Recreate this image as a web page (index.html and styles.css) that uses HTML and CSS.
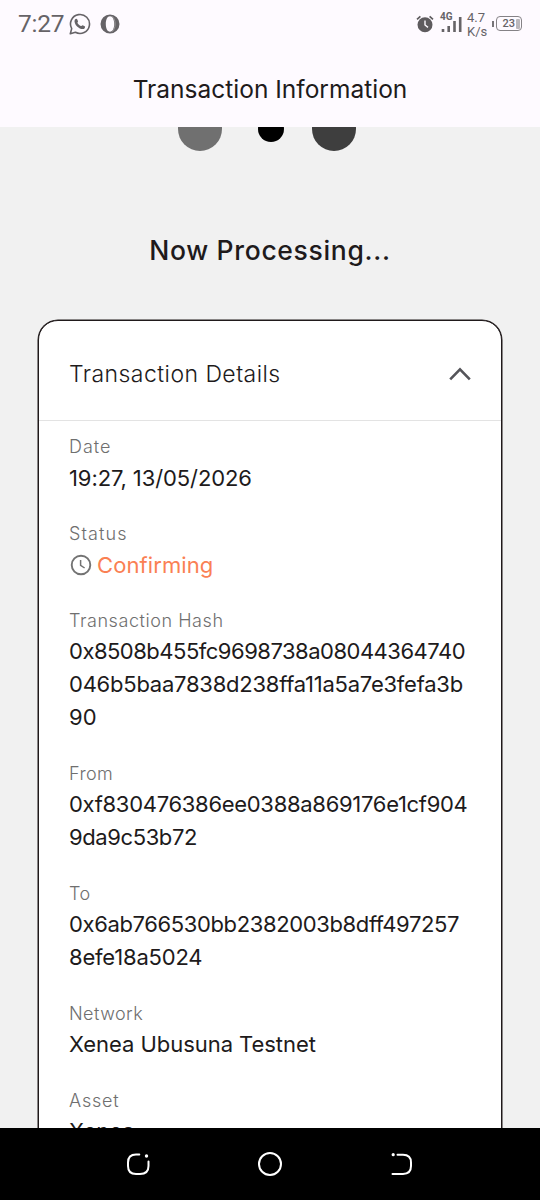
FILE: index.html
```html
<!DOCTYPE html>
<html lang="en">
<head>
<meta charset="utf-8">
<title>Transaction Information</title>
<link rel="stylesheet" href="styles.css">
</head>
<body>
<div class="screen">
  <header class="top">
    <div class="statusbar">
      <div class="status-left">
        <span class="clock">7:27</span>
        <svg class="whatsapp" width="22" height="22" viewBox="0 0 22 22">
          <path d="M1.3 20.7 2.7 15.6A9.5 9.5 0 1 1 6.4 19.3Z" fill="none" stroke="#666367" stroke-width="1.6" stroke-linejoin="round"/>
          <path d="M5.800 6.700c.7-1.300 2.100-1.300 2.500-.3l.7 1.800c.2.700-.8 1.200-.5 1.800.8 1.500 1.900 2.400 3.400 3.100.6.200 1.200-1.200 1.800-.9l2 1c.9.500.1 2.200-.9 2.700-1.600.700-4.600-.300-6.700-2.400-2-2-3.200-5-2.300-6.800Z" fill="#666367"/>
        </svg>
        <svg class="opera" width="20" height="20" viewBox="0 0 20 20">
          <path fill="#666367" fill-rule="evenodd" d="M10 .5a9.500 9.500 0 1 0 0 19a9.500 9.500 0 1 0 0-19ZM10 2.300c2.700 0 4.200 3.400 4.200 7.700s-1.500 7.700-4.200 7.700S5.800 14.300 5.800 10 7.300 2.300 10 2.300Z"/>
          <path d="M12 2.200c4.200 3.100 4.200 12.500 0 15.600" fill="none" stroke="#aaa7aa" stroke-width=".7"/>
        </svg>
      </div>
      <div class="status-right">
        <svg width="18" height="18" viewBox="0 0 18 18">
          <circle cx="9" cy="9.800" r="7.500" fill="#5e5b5e"/>
          <path d="M1 4.300 4.400 1.300M17 4.300 13.600 1.300" stroke="#5e5b5e" stroke-width="1.700"/>
          <path d="M9 5.500V10l3 2.400" fill="none" stroke="#fefaff" stroke-width="1.400"/>
        </svg>
        <div class="signal">
          <span class="gen">4G</span>
          <svg width="22" height="20" viewBox="0 0 22 20">
            <path d="M3 15v3M8.700 12V18M14.500 7V18M20.200 3v15" stroke="#666367" stroke-width="2.600"/>
          </svg>
        </div>
        <div class="speed"><span>4.7</span><span>K/s</span></div>
        <div class="battery"><span class="nub"></span><span class="cell">23<i class="rest"></i></span></div>
      </div>
    </div>
    <h1 class="title">Transaction Information</h1>
  </header>

  <main class="content">
    <div class="loader">
      <span class="dot dot-mid"></span>
      <span class="dot dot-small"></span>
      <span class="dot dot-dark"></span>
    </div>
    <h2 class="processing">Now Processing...</h2>
    <section class="card">
      <div class="card-head">
        <span class="card-title">Transaction Details</span>
        <svg width="22" height="14" viewBox="0 0 22 14"><path d="M1.200 12.300 11 2.300l9.800 10" fill="none" stroke="#545459" stroke-width="2.600"/></svg>
      </div>
      <dl class="details">
        <div class="item"><dt><span class="l-date">Date</span></dt><dd><span class="v-date">19:27, 13/05/2026</span></dd></div>
        <div class="item"><dt><span class="l-status">Status</span></dt>
          <dd class="confirming">
            <svg width="22" height="22" viewBox="0 0 22 22" fill="none" stroke="#737373"><circle cx="11" cy="11" r="9.300" stroke-width="1.900"/><path d="M10.600 6v5.300l4 2.700" stroke-width="1.500"/></svg>
            <span class="v-status">Confirming</span>
          </dd></div>
        <div class="item"><dt><span class="l-hash">Transaction Hash</span></dt><dd><span class="hash-1">0x8508b455fc9698738a08044364740</span><br><span class="hash-2">046b5baa7838d238ffa11a5a7e3fefa3b</span><br><span class="hash-3">90</span></dd></div>
        <div class="item"><dt><span class="l-from">From</span></dt><dd><span class="from-1">0xf830476386ee0388a869176e1cf904</span><br><span class="from-2">9da9c53b72</span></dd></div>
        <div class="item"><dt><span class="l-to">To</span></dt><dd><span class="to-1">0x6ab766530bb2382003b8dff497257</span><br><span class="to-2">8efe18a5024</span></dd></div>
        <div class="item"><dt><span class="l-net">Network</span></dt><dd><span class="v-net">Xenea Ubusuna Testnet</span></dd></div>
        <div class="item"><dt><span class="l-asset">Asset</span></dt><dd><span class="v-asset">Xenea</span></dd></div>
      </dl>
    </section>
  </main>

  <nav class="navbar">
    <svg width="26" height="26" viewBox="0 0 26 26" fill="none" stroke="#fff" stroke-width="2" stroke-linecap="round">
      <path d="M14.300 3.500H11Q3 3.500 3 11.500V15Q3 23 11 23h4Q23.500 23 23.500 15v-4.500"/><circle cx="21.500" cy="5" r="1.700" fill="#fff" stroke="none"/>
    </svg>
    <svg width="26" height="26" viewBox="0 0 26 26" fill="none" stroke="#fff" stroke-width="2"><circle cx="13" cy="13" r="11"/></svg>
    <svg width="26" height="26" viewBox="0 0 26 26" fill="none" stroke="#fff" stroke-width="2" stroke-linecap="round">
      <path d="M8.500 3.700H14Q22 3.700 22 11.500V15Q22 22.900 14 22.900H3.500"/><circle cx="4.200" cy="3.700" r="1.600" fill="#fff" stroke="none"/>
    </svg>
  </nav>
</div>
</body>
</html>
```
FILE: styles.css
```css
* { box-sizing: border-box; margin: 0; padding: 0; }
body { background: #f1f1f1; font-family: Inter, "Liberation Sans", sans-serif; color: #201a1b; }
.screen { width: 540px; height: 1200px; display: flex; flex-direction: column; overflow: hidden; }

.top { height: 127px; flex: none; background: #fefaff; }
.statusbar { height: 50px; padding: 0 18px; display: flex; justify-content: space-between; font-family: Roboto, sans-serif; color: #666367; }
.status-left { display: flex; align-items: center; height: 48px; }
.clock { font-size: 24.500px; line-height: 48px; width: 51px; letter-spacing: -.2px; }
.opera { margin-left: 9px; }
.status-right { display: flex; height: 47px; align-items: center; }
.signal { width: 23px; height: 20px; margin-left: 6px; display: grid; }
.signal > * { grid-area: 1 / 1; }
.gen { font-size: 10px; font-weight: 700; line-height: 10px; margin-top: -2px; }
.speed { display: flex; flex-direction: column; font-size: 13px; line-height: 14px; margin-left: 4px; width: 21px; padding-top: 2px; }
.battery { display: flex; align-items: center; margin-left: 4px; }
.nub { width: 2px; height: 6px; background: #777478; margin-right: 2px; }
.cell { width: 26px; height: 15px; border: 1px solid #858286; border-radius: 4px; display: flex; align-items: center; justify-content: flex-end; gap: 1px; padding-right: 1px; font-size: 11px; font-weight: 500; }
.rest { width: 4px; height: 10px; background: #bbb8bc; border-radius: 1px; }
.title { height: 77px; line-height: 78px; text-align: center; font-size: 24.500px; font-weight: 400; }

.content { flex: 1; min-height: 0; overflow: hidden; }
.loader { height: 24px; display: flex; justify-content: center; align-items: flex-end; }
.dot { border-radius: 50%; flex: none; }
.dot-mid { width: 44px; height: 44px; background: #707070; margin-right: 36px; }
.dot-small { width: 26px; height: 26px; background: #000; margin-bottom: 9px; margin-right: 28px; }
.dot-dark { width: 44px; height: 44px; background: #3e3e3e; margin-right: 7px; }
.processing { margin-top: 79px; height: 40px; line-height: 40px; text-align: center; font-size: 26.500px; font-weight: 500; letter-spacing: .68px; }

.card { margin: 50px 38px 0; height: 900px; border: 1px solid #201a1b; box-shadow: 0 0 0 .5px #201a1b; border-radius: 20px; background: #fff; }
.card-head { height: 100px; padding: 6px 30px 0; border-bottom: 1px solid #e3e3e3; display: flex; align-items: center; justify-content: space-between; }
.card-title { font-size: 23px; font-weight: 300; letter-spacing: .45px; }
.details { padding: 12px 30px 0; }
.item { margin-bottom: 25px; white-space: nowrap; }
dt { height: 27px; line-height: 27px; margin-bottom: 2px; font-size: 18px; font-weight: 300; color: #6f6f6f; }
dd { line-height: 33px; font-size: 22px; }
.item:nth-child(n+3) { margin-bottom: 26px; }
.item:nth-child(n+3) dt { margin-bottom: 1px; }
.confirming { display: flex; align-items: center; gap: 5px; height: 33px; color: #fa8053; padding-left: 1px; }
.confirming svg { margin-bottom: 2px; }

/* per-line tracking */
.l-date { letter-spacing: 1px; }
.l-status { letter-spacing: 1.100px; }
.l-hash { letter-spacing: .56px; }
.l-from { letter-spacing: .4px; }
.l-to { letter-spacing: .5px; }
.l-net { letter-spacing: .45px; }
.l-asset { letter-spacing: .8px; }
.v-date { letter-spacing: -.1px; }
.v-status { letter-spacing: .1px; }
.hash-1 { letter-spacing: -.5px; }
.hash-2 { letter-spacing: -.24px; }
.from-1 { letter-spacing: -.3px; }
.from-2 { letter-spacing: -.4px; }
.to-1 { letter-spacing: -.37px; }
.to-2 { letter-spacing: -.2px; }
.v-net { letter-spacing: -.05px; }

.navbar { height: 72px; flex: none; background: #000; display: flex; justify-content: center; align-items: center; gap: 106px; }
```
